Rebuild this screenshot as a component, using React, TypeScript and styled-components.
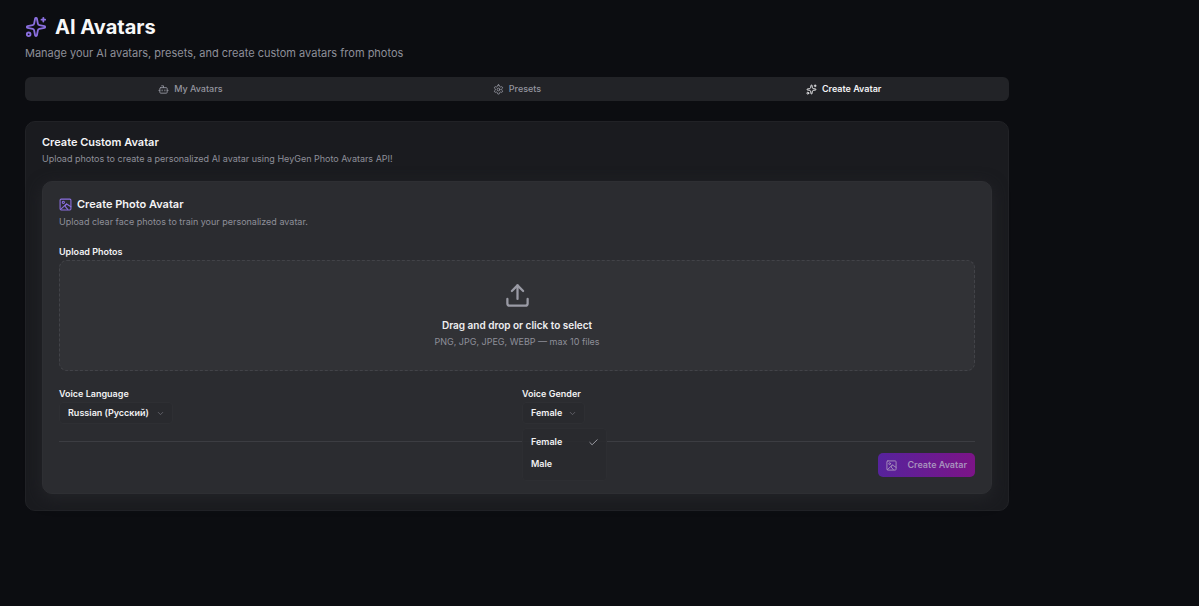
import React, { useState } from "react";
import styled, { createGlobalStyle, css } from "styled-components";
import { Bot, Check, ChevronDown, Sparkles, Upload } from "lucide-react";

const GlobalStyle = createGlobalStyle`
  *, *::before, *::after { box-sizing: border-box; }
  html { background: #0c0d11; }
  body {
    margin: 0;
    background: #0c0d11;
    color: #f4f4f6;
    font-family: Inter, "Liberation Sans", sans-serif;
  }
  h1, h2, h3, p, ul { margin: 0; padding: 0; }
  button, select, input { font: inherit; color: inherit; }
`;

const Page = styled.main`
  min-height: 100vh;
  max-width: 1034px;
  padding: 15px 25px 24px;
  @media (max-width: 600px) {
    padding: 15px 12px;
  }
`;

const TitleRow = styled.div`
  display: flex;
  align-items: center;
  gap: 8px;
  color: #8b6fe0;
`;

const Title = styled.h1`
  color: #f7f7f8;
  font-size: 20px;
  line-height: 24px;
  font-weight: 700;
`;

const Muted = styled.p<{ $large?: boolean }>`
  color: #8e8f99;
  font-size: ${(p) => (p.$large ? 11 : 9)}px;
  line-height: 16px;
`;

const Subtitle = styled(Muted)`
  margin-top: 6px;
`;

const TabList = styled.div`
  display: grid;
  grid-template-columns: repeat(3, 1fr);
  margin-top: 16px;
  height: 24px;
  padding: 2px;
  border-radius: 6px;
  background: #222327;
`;

const Tab = styled.button<{ $active?: boolean }>`
  display: flex;
  align-items: center;
  justify-content: center;
  gap: 5px;
  padding: 0;
  border: 0;
  background: none;
  color: ${(p) => (p.$active ? "#f1f1f3" : "#94959f")};
  font-size: 9px;
  line-height: 16px;
  font-weight: ${(p) => (p.$active ? 600 : 500)};
  cursor: pointer;
`;

const Panel = styled.section`
  margin-top: 20px;
  padding: 12px 16px 16px;
  border: 1px solid #212226;
  border-radius: 10px;
  background: #1a1b1f;
`;

const PanelTitle = styled.h2`
  font-size: 11px;
  line-height: 17px;
  font-weight: 600;
`;

const Card = styled.form`
  margin-top: 14px;
  padding: 14px 16px 16px;
  border: 1px solid #2e2f33;
  border-radius: 10px;
  background: #2b2c30;
  box-shadow: 0 4px 16px #242529;
`;

const CardHeading = styled.div`
  display: flex;
  align-items: center;
  gap: 5px;
  color: #8b6fe0;
`;

const CardTitle = styled.h3`
  color: #f4f4f6;
  font-size: 11px;
  line-height: 17px;
  font-weight: 600;
`;

const CardText = styled(Muted)`
  margin-top: 1px;
`;

const controlText = css`
  color: #f1f1f3;
  font-size: 9px;
  line-height: 16px;
  font-weight: 600;
`;

const Label = styled.label`
  display: block;
  ${controlText}
`;

const UploadField = styled.div`
  margin-top: 14px;
`;

const DropZone = styled.label`
  display: flex;
  flex-direction: column;
  align-items: center;
  justify-content: center;
  min-height: 111px;
  border: 1px dashed #424348;
  border-radius: 8px;
  background: #313236;
  color: #9a9ba5;
  cursor: pointer;
`;

const DropTitle = styled.span`
  margin-top: 8px;
  color: #eeeef0;
  font-size: 10px;
  line-height: 17px;
  font-weight: 600;
`;

const FileInput = styled.input`
  position: absolute;
  width: 1px;
  height: 1px;
  opacity: 0;
`;

const Fields = styled.div`
  display: grid;
  grid-template-columns: repeat(2, 1fr);
  gap: 10px;
  margin-top: 15px;
`;

const SelectBox = styled.div`
  position: relative;
  width: fit-content;
`;

const Trigger = styled.div`
  display: flex;
  align-items: center;
  position: relative;
  width: fit-content;
  svg {
    position: absolute;
    right: 8px;
    color: #6d6e76;
    pointer-events: none;
  }
`;

const Select = styled.select<{ $width: number }>`
  appearance: none;
  width: ${(p) => p.$width}px;
  height: 22px;
  padding: 0 16px 0 8px;
  border: 1px solid #2e2f33;
  border-radius: 4px;
  background: #292a2e;
  ${controlText}
`;

const Menu = styled.div`
  position: absolute;
  top: 26px;
  left: 0;
  width: 85px;
  padding: 2px 0 5px;
  border: 1px solid #2d2e32;
  border-radius: 4px;
  background: #292a2ee0;
`;

const Option = styled.button`
  display: flex;
  align-items: center;
  justify-content: space-between;
  width: 100%;
  height: 22px;
  padding: 0 7px 0 8px;
  border: 0;
  background: none;
  ${controlText}
  svg {
    color: #a4a5ad;
  }
`;

const Actions = styled.div`
  display: flex;
  justify-content: flex-end;
  margin-top: 17px;
  padding-top: 11px;
  border-top: 1px solid #3c3d42;
`;

const Submit = styled.button`
  display: flex;
  align-items: center;
  gap: 10px;
  height: 24px;
  padding: 0 8px;
  border: 0;
  border-radius: 5px;
  background: linear-gradient(90deg, #56239c, #7c1487);
  color: #a790bd;
  font-size: 9px;
  line-height: 16px;
  font-weight: 600;
  cursor: pointer;
`;

const stroke = {
  viewBox: "0 0 24 24",
  fill: "none",
  stroke: "currentColor",
  strokeWidth: 2,
  strokeLinecap: "round",
  strokeLinejoin: "round",
  "aria-hidden": true,
} as const;

function PhotoIcon({ size }: { size: number }) {
  return (
    <svg width={size} height={size} {...stroke}>
      <rect x="2" y="2" width="20" height="20" rx="2" />
      <circle cx="8" cy="8" r="2" />
      <path d="M3 21 14 11l8 5" />
      <path d="m14 11-3 4 5 6" />
    </svg>
  );
}

function GearIcon({ size }: { size: number }) {
  return (
    <svg width={size} height={size} {...stroke}>
      <path d="M12.22 2h-.44a2 2 0 0 0-2 2v.18a2 2 0 0 1-1 1.73l-.43.25a2 2 0 0 1-2 0l-.15-.08a2 2 0 0 0-2.73.73l-.22.38a2 2 0 0 0 .73 2.73l.15.1a2 2 0 0 1 1 1.72v.51a2 2 0 0 1-1 1.74l-.15.09a2 2 0 0 0-.73 2.73l.22.38a2 2 0 0 0 2.73.73l.15-.08a2 2 0 0 1 2 0l.43.25a2 2 0 0 1 1 1.73V20a2 2 0 0 0 2 2h.44a2 2 0 0 0 2-2v-.18a2 2 0 0 1 1-1.73l.43-.25a2 2 0 0 1 2 0l.15.08a2 2 0 0 0 2.73-.73l.22-.39a2 2 0 0 0-.73-2.73l-.15-.08a2 2 0 0 1-1-1.74v-.5a2 2 0 0 1 1-1.74l.15-.09a2 2 0 0 0 .73-2.73l-.22-.38a2 2 0 0 0-2.73-.73l-.15.08a2 2 0 0 1-2 0l-.43-.25a2 2 0 0 1-1-1.73V4a2 2 0 0 0-2-2z" />
      <circle cx="12" cy="12" r="3" />
    </svg>
  );
}

const genders = ["Female", "Male"];

const tabs = [
  { name: "My Avatars", Icon: Bot },
  { name: "Presets", Icon: GearIcon },
  { name: "Create Avatar", Icon: Sparkles },
];

export default function App() {
  const [tab, setTab] = useState("Create Avatar");
  const [gender, setGender] = useState("Female");

  return (
    <>
      <GlobalStyle />
      <Page>
        <header>
          <TitleRow>
            <Sparkles size={22} aria-hidden="true" />
            <Title>AI Avatars</Title>
          </TitleRow>
          <Subtitle $large>Manage your AI avatars, presets, and create custom avatars from photos</Subtitle>
        </header>

        <TabList role="tablist">
          {tabs.map(({ name, Icon }) => (
            <Tab key={name} type="button" role="tab" aria-selected={tab === name} $active={tab === name} onClick={() => setTab(name)}>
              <Icon size={11} />
              {name}
            </Tab>
          ))}
        </TabList>

        <Panel>
          <PanelTitle>Create Custom Avatar</PanelTitle>
          <Muted>Upload photos to create a personalized AI avatar using HeyGen Photo Avatars API!</Muted>

          <Card onSubmit={(e) => e.preventDefault()}>
            <CardHeading>
              <PhotoIcon size={13} />
              <CardTitle>Create Photo Avatar</CardTitle>
            </CardHeading>
            <CardText>Upload clear face photos to train your personalized avatar.</CardText>

            <UploadField>
              <Label htmlFor="photos">Upload Photos</Label>
              <DropZone>
                <Upload size={27} aria-hidden="true" />
                <DropTitle>Drag and drop or click to select</DropTitle>
                <Muted as="span">PNG, JPG, JPEG, WEBP — max 10 files</Muted>
                <FileInput id="photos" type="file" accept="image/*" multiple />
              </DropZone>
            </UploadField>

            <Fields>
              <div>
                <Label htmlFor="language">Voice Language</Label>
                <Trigger>
                  <Select id="language" $width={114}>
                    <option>Russian (Русский)</option>
                  </Select>
                  <ChevronDown size={9} aria-hidden="true" />
                </Trigger>
              </div>
              <div>
                <Label htmlFor="gender">Voice Gender</Label>
                <SelectBox>
                  <Trigger>
                    <Select id="gender" $width={63} value={gender} onChange={(e) => setGender(e.target.value)}>
                      {genders.map((g) => (
                        <option key={g}>{g}</option>
                      ))}
                    </Select>
                    <ChevronDown size={9} aria-hidden="true" />
                  </Trigger>
                  <Menu role="listbox" aria-label="Voice Gender">
                    {genders.map((g) => (
                      <Option key={g} type="button" role="option" aria-selected={g === gender} onClick={() => setGender(g)}>
                        {g}
                        {g === gender && <Check size={11} aria-hidden="true" />}
                      </Option>
                    ))}
                  </Menu>
                </SelectBox>
              </div>
            </Fields>

            <Actions>
              <Submit type="submit">
                <PhotoIcon size={11} />
                Create Avatar
              </Submit>
            </Actions>
          </Card>
        </Panel>
      </Page>
    </>
  );
}
